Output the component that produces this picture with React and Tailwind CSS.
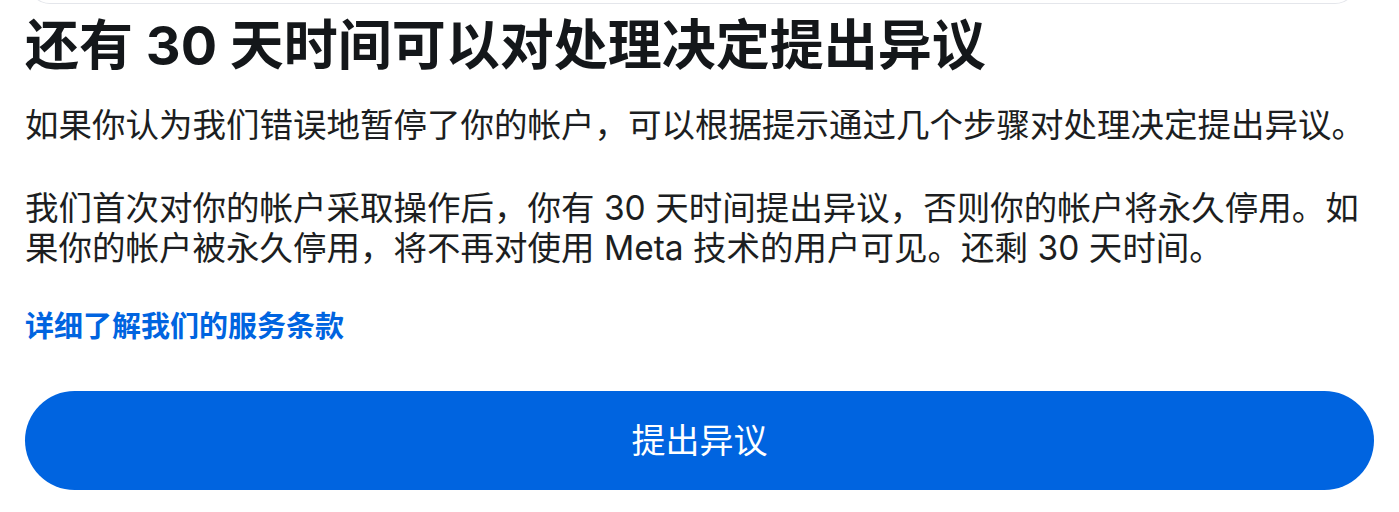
export default function App() {
  const font = {
    fontFamily: '"Inter", "Noto Sans CJK SC", sans-serif',
  };

  return (
    <div className="h-screen bg-white overflow-hidden" style={font}>
      {/* bottom edge of the card above */}
      <div className="-mt-[36px] h-[40px] ml-[28px] mr-[42px] rounded-b-[22px] border-x border-b border-[#e4e6eb]" />

      <main className="px-[25px]">
        <h1 className="mt-[10px] text-[54px] leading-[64px] font-bold text-[#14171a] whitespace-nowrap">
          还有 30 天时间可以对处理决定提出异议
        </h1>

        <p className="mt-[27px] text-[33.5px] leading-[40px] text-[#1c1e21]">
          如果你认为我们错误地暂停了你的帐户，可以根据提示通过几个步骤对处理决定提出异议。
        </p>

        <p className="mt-[43px] text-[33.5px] leading-[40px] text-[#1c1e21]">
          我们首次对你的帐户采取操作后，你有 30 天时间提出异议，否则你的帐户将永久停用。如果你的帐户被永久停用，将不再对使用 Meta 技术的用户可见。还剩 30 天时间。
        </p>

        <a
          href="#"
          className="mt-[41px] block text-[29px] leading-[36px] font-bold text-[#0064e0]"
        >
          详细了解我们的服务条款
        </a>

        <button
          type="button"
          className="mt-[46px] w-full h-[99px] rounded-full bg-[#0064e0] text-white text-[34px] font-normal"
        >
          提出异议
        </button>
      </main>
    </div>
  );
}
